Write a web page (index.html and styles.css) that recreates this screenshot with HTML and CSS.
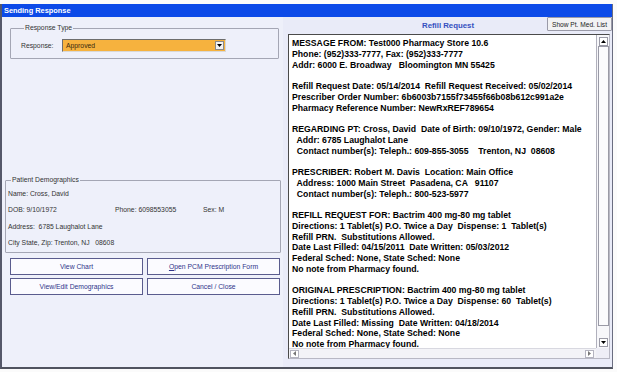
FILE: index.html
```html
<!DOCTYPE html>
<html>
<head>
<meta charset="utf-8">
<link rel="stylesheet" href="styles.css">
</head>
<body>
<div class="screen">
  <div class="window">
    <div class="titlebar">Sending Response</div>
    <div class="body">
      <div class="left">
        <fieldset class="group resp">
          <legend>Response Type</legend>
          <div class="resp-row">
            <span class="resp-label">Response:</span>
            <div class="combo">
              <span class="combo-val">Approved</span>
              <span class="combo-btn"><svg width="5" height="3" viewBox="0 0 5 3"><path d="M0 0H5L2.5 3Z" fill="#000"/></svg></span>
            </div>
          </div>
        </fieldset>
        <fieldset class="group demo">
          <legend>Patient Demographics</legend>
          <div class="demo-line">Name: Cross, David</div>
          <div class="demo-line demo-cols">
            <span class="c1">DOB: 9/10/1972</span>
            <span class="c2">Phone: 6098553055</span>
            <span class="c3">Sex: M</span>
          </div>
          <div class="demo-line">Address:&nbsp; 6785 Laughalot Lane</div>
          <div class="demo-line">City State, Zip: Trenton, NJ&nbsp;&nbsp; 08608</div>
        </fieldset>
        <div class="buttons">
          <button class="btn">View Chart</button>
          <button class="btn"><u>O</u>pen PCM Prescription Form</button>
          <button class="btn">View/Edit Demographics</button>
          <button class="btn">Cancel / Close</button>
        </div>
      </div>
      <div class="right">
        <div class="right-head">
          <span class="rr-title">Refill Request</span>
          <button class="medlist">Show Pt. Med. List</button>
        </div>
        <div class="textbox">
          <div class="text">MESSAGE FROM: Test000 Pharmacy Store 10.6
Phone: (952)333-7777, Fax: (952)333-7777
Addr: 6000 E. Broadway   Bloomington MN 55425

Refill Request Date: 05/14/2014  Refill Request Received: 05/02/2014
Prescriber Order Number: 6b6003b7155f73455f66b08b612c991a2e
Pharmacy Reference Number: NewRxREF789654

REGARDING PT: Cross, David  Date of Birth: 09/10/1972, Gender: Male
  Addr: 6785 Laughalot Lane
  Contact number(s): Teleph.: 609-855-3055    Trenton, NJ  08608

PRESCRIBER: Robert M. Davis  Location: Main Office
  Address: 1000 Main Street  Pasadena, CA   91107
  Contact number(s): Teleph.: 800-523-5977

REFILL REQUEST FOR: Bactrim 400 mg-80 mg tablet
Directions: 1 Tablet(s) P.O. Twice a Day  Dispense: 1  Tablet(s)
Refill PRN.  Substitutions Allowed.
Date Last Filled: 04/15/2011  Date Written: 05/03/2012
Federal Sched: None, State Sched: None
No note from Pharmacy found.

ORIGINAL PRESCRIPTION: Bactrim 400 mg-80 mg tablet
Directions: 1 Tablet(s) P.O. Twice a Day  Dispense: 60  Tablet(s)
Refill PRN.  Substitutions Allowed.
Date Last Filled: Missing  Date Written: 04/18/2014
Federal Sched: None, State Sched: None
No note from Pharmacy found.</div>
          <div class="vscroll">
            <span class="arrow"><svg width="5" height="3" viewBox="0 0 5 3"><path d="M0 3H5L2.5 0Z" fill="#000"/></svg></span>
            <span class="thumb"></span>
            <span class="arrow"><svg width="5" height="3" viewBox="0 0 5 3"><path d="M0 0H5L2.5 3Z" fill="#000"/></svg></span>
          </div>
          <div class="hscroll">
            <span class="harrow"><svg width="3" height="5" viewBox="0 0 3 5"><path d="M3 0V5L0 2.5Z" fill="#777"/></svg></span>
            <span class="harrow"><svg width="3" height="5" viewBox="0 0 3 5"><path d="M0 0V5L3 2.5Z" fill="#777"/></svg></span>
          </div>
          <div class="corner"></div>
        </div>
      </div>
    </div>
  </div>
</div>
</body>
</html>
```

FILE: styles.css
```css
* { box-sizing: border-box; }
body {
  margin: 0;
  background: #ffffff;
  font-family: "Liberation Sans", Arial, sans-serif;
}
.screen {
  width: 617px;
  height: 372px;
  overflow: hidden;
  background: #fbfbfb;
  padding-top: 4px;
}
.window {
  width: 613px;
  height: 365px;
  border-left: 2px solid #55586a;
  border-right: 1px solid #6a6d80;
  border-bottom: 2px solid #50535f;
  display: flex;
  flex-direction: column;
  background: #eef0fa;
}
.titlebar {
  height: 13px;
  background: #0c4ae8;
  color: #ffffff;
  font-weight: bold;
  font-size: 7.4px;
  line-height: 13px;
  padding-left: 2px;
}
.body {
  flex: 1;
  display: flex;
  min-height: 0;
}
.left {
  width: 281px;
  display: flex;
  flex-direction: column;
  padding: 7px 2px 0 3px;
  color: #222;
  font-size: 6.8px;
}
.group {
  margin: 0;
  border: 1px solid #a4a6b4;
  border-radius: 1px;
  min-width: 0;
}
.group legend {
  padding: 0 1px;
  margin-left: 3px;
  font-size: 6.8px;
  line-height: 8px;
  color: #333;
}
.resp {
  margin: 0 2px 0 5px;
  padding: 7px 4px 6px 10px;
}
.resp-row {
  display: flex;
  align-items: center;
}
.resp-label {
  width: 41px;
  color: #333;
}
.combo {
  width: 164px;
  height: 13px;
  background: #f6b23e;
  border: 1px solid #6d6d6d;
  border-right-color: #d8d8d8;
  border-bottom-color: #d8d8d8;
  display: flex;
  align-items: center;
  justify-content: space-between;
  padding: 0 1px 0 3px;
  color: #3a2a10;
}
.combo-btn {
  width: 9px;
  height: 9px;
  background: #f4f4f4;
  border: 1px solid #8a8a8a;
  display: flex;
  align-items: center;
  justify-content: center;
}
.demo {
  margin: 117px 0 0 0;
  padding: 2px 4px 1px 2px;
}
.demo-line {
  height: 16.3px;
  line-height: 16.3px;
  color: #333;
  white-space: nowrap;
}
.demo-cols { display: flex; }
.demo-cols .c1 { width: 107px; }
.demo-cols .c2 { width: 88px; }
.buttons {
  margin: 5px 1px 0 5px;
  display: grid;
  grid-template-columns: 1fr 1fr;
  gap: 3px 4px;
}
.btn {
  height: 17px;
  border: 1px solid #5a5c8e;
  background: #fbfbff;
  color: #30348a;
  font-family: "Liberation Sans", Arial, sans-serif;
  font-size: 6.8px;
  padding: 0;
  border-radius: 0;
}
.right {
  flex: 1;
  display: flex;
  flex-direction: column;
  padding: 0 1px 8px 5px;
  background: #e9ebf8;
}
.right-head {
  height: 17px;
  display: flex;
  align-items: flex-start;
  padding-left: 134px;
}
.rr-title {
  font-weight: bold;
  color: #3550c0;
  font-size: 7.8px;
  line-height: 17px;
  flex: 1;
}
.medlist {
  height: 14px;
  padding: 0 4px;
  margin-right: -1px;
  font-family: "Liberation Sans", Arial, sans-serif;
  font-size: 6.6px;
  color: #222;
  background: #f2f2f4;
  border: 1px solid #9a9aa8;
  border-radius: 1px;
}
.textbox {
  flex: 1;
  margin-right: 1px;
  background: #ffffff;
  border: 1px solid #4a4a4a;
  border-right-color: #b8b8c4;
  border-bottom-color: #b8b8c4;
  display: grid;
  grid-template-columns: 1fr 13px;
  grid-template-rows: 1fr 10px;
  min-height: 0;
}
.text {
  overflow: hidden;
  white-space: pre;
  font-weight: bold;
  font-size: 8.7px;
  line-height: 10.75px;
  color: #000;
  padding: 3px 0 0 3px;
}
.vscroll {
  border-left: 1px solid #b0b0bc;
  display: flex;
  flex-direction: column;
  align-items: center;
  padding: 2px 0 1px;
  background: #f7f7fa;
}
.arrow {
  width: 9px;
  height: 9px;
  background: #fff;
  border: 1px solid #9a9aa6;
  display: flex;
  align-items: center;
  justify-content: center;
}
.thumb {
  width: 11px;
  height: 280px;
  border: 1px solid #9a9aa6;
  background: #fbfbfd;
  margin-bottom: auto;
}
.hscroll {
  display: flex;
  justify-content: space-between;
  align-items: center;
  padding: 0 2px 0 1px;
  background: #f3f3f7;
  border-top: 1px solid #d8d8e0;
}
.harrow {
  width: 9px;
  height: 8px;
  background: #fff;
  border: 1px solid #b4b4c0;
  display: flex;
  align-items: center;
  justify-content: center;
}
.corner {
  background: #eeeef6;
}
```
